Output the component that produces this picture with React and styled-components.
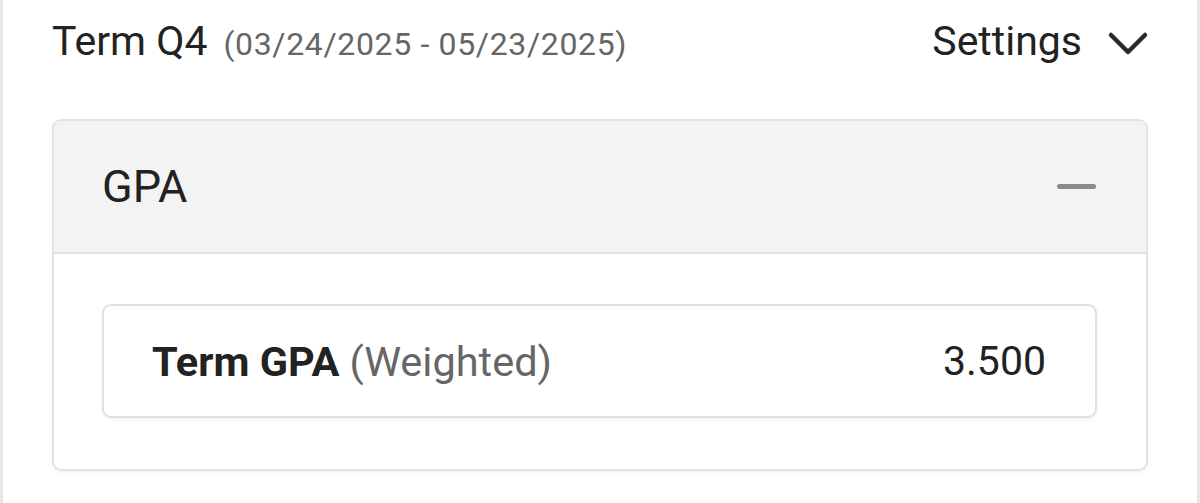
import React from "react";
import styled, { createGlobalStyle } from "styled-components";

const Global = createGlobalStyle`
  html, body { margin: 0; padding: 0; background: #ffffff; }
  body { font-family: Roboto, "Noto Sans", Arial, sans-serif; color: #222; }
  *, *::before, *::after { box-sizing: border-box; }
`;

const Page = styled.div`
  width: 1200px;
  height: 503px;
  border-left: 3px solid #e6e6e6;
  border-right: 3px solid #e6e6e6;
  padding: 0 49px;
  overflow: hidden;
`;

const TopRow = styled.div`
  height: 119px;
  padding-top: 17px;
  display: flex;
  align-items: flex-start;
  justify-content: space-between;
`;

const TermTitle = styled.div`
  display: flex;
  align-items: baseline;
  gap: 16px;
`;

const TermName = styled.span`
  font-size: 41px;
  color: #222;
`;

const TermDates = styled.span`
  font-size: 32px;
  letter-spacing: 0.65px;
  color: #666;
`;

const SettingsButton = styled.button`
  display: flex;
  align-items: center;
  gap: 25px;
  background: none;
  border: none;
  padding: 0;
  margin-right: -1px;
  font-family: inherit;
  font-size: 41px;
  color: #222;
  cursor: pointer;
`;

const Chevron = styled.svg`
  display: block;
  margin-top: 6px;
`;

const Card = styled.section`
  border: 2px solid #e2e2e2;
  border-radius: 9px;
  overflow: hidden;
  box-shadow: 0 2px 4px rgba(0, 0, 0, 0.04);
`;

const CardHeader = styled.div`
  height: 133px;
  background: #f3f3f3;
  border-bottom: 2px solid #e0e0e0;
  display: flex;
  align-items: center;
  justify-content: space-between;
  padding: 0 50px 0 48px;
`;

const CardTitle = styled.h2`
  margin: 0;
  font-size: 45px;
  font-weight: 400;
  color: #222;
`;

const Minus = styled.span`
  display: block;
  width: 39px;
  height: 5px;
  border-radius: 3px;
  background: #8a8a8a;
`;

const CardBody = styled.div`
  padding: 50px 49px 51px 48px;
`;

const StatRow = styled.div`
  height: 114px;
  border: 2px solid #e0e0e0;
  border-radius: 9px;
  display: flex;
  align-items: center;
  justify-content: space-between;
  padding: 0 49px 0 48px;
  box-shadow: 0 2px 4px rgba(0, 0, 0, 0.04);
`;

const StatLabel = styled.div`
  font-size: 41.5px;
  color: #222;
`;

const Strong = styled.strong`
  font-weight: 700;
`;

const Muted = styled.span`
  color: #666;
`;

const StatValue = styled.div`
  font-size: 41px;
  color: #222;
`;

export default function App() {
  return (
    <>
      <Global />
      <Page>
        <TopRow>
          <TermTitle>
            <TermName>Term Q4</TermName>
            <TermDates>(03/24/2025 - 05/23/2025)</TermDates>
          </TermTitle>
          <SettingsButton>
            Settings
            <Chevron width="42" height="26" viewBox="0 0 42 26" fill="none">
              <path
                d="M4 4 L21 21 L38 4"
                stroke="#2a2a2a"
                strokeWidth="4.5"
                strokeLinecap="round"
                strokeLinejoin="round"
              />
            </Chevron>
          </SettingsButton>
        </TopRow>
        <Card>
          <CardHeader>
            <CardTitle>GPA</CardTitle>
            <Minus />
          </CardHeader>
          <CardBody>
            <StatRow>
              <StatLabel>
                <Strong>Term GPA</Strong> <Muted>(Weighted)</Muted>
              </StatLabel>
              <StatValue>3.500</StatValue>
            </StatRow>
          </CardBody>
        </Card>
      </Page>
    </>
  );
}
